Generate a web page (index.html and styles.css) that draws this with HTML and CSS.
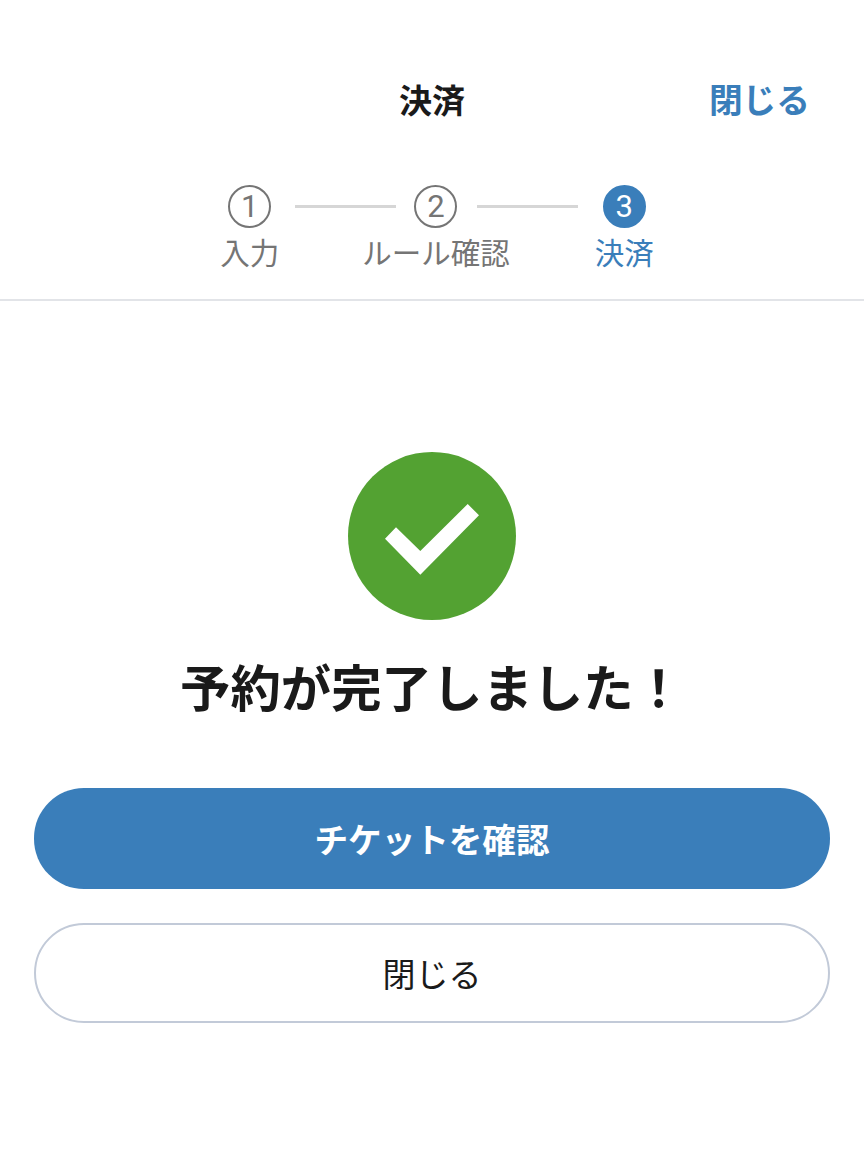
FILE: index.html
```html
<!DOCTYPE html><html lang="ja"><head><meta charset="utf-8"/>
<title>決済</title>
<link rel="stylesheet" href="styles.css">
</head>
<body>
<header class="top">
	<div class="title">決済</div>
	<a class="close-link">閉じる</a>
</header>
<div class="steps">
	<div class="step">
		<span class="num">1</span>
		<span class="label">入力</span>
	</div>
	<div class="line line1"></div>
	<div class="step">
		<span class="num">2</span>
		<span class="label">ルール確認</span>
	</div>
	<div class="line line2"></div>
	<div class="step on">
		<span class="num">3</span>
		<span class="label">決済</span>
	</div>
</div>
<main class="done">
	<svg class="check" width="168" height="168" viewBox="0 0 168 168">
		<circle cx="84" cy="84" r="84" fill="#53a232"/>
		<polygon points="37,86.7 48,75.3 72.3,99 119.7,52 131,63.3 72.3,122.7" fill="#fff"/>
	</svg>
	<h1>予約が完了しました！</h1>
	<button class="btn primary">チケットを確認</button>
	<button class="btn plain">閉じる</button>
</main>
</body>
</html>
```

FILE: styles.css
```css
body {
	margin: 0;
	background: #fff;
	color: #1a1a1a;
	font-family: "Noto Sans CJK JP", "Liberation Sans", sans-serif;
}
/* header */
.top {
	position: relative;
	height: 202px;
	box-sizing: border-box;
	padding-top: 74px;
	text-align: center;
}
.title {
	font-size: 33px;
	font-weight: 700;
	line-height: 50px;
}
.close-link {
	position: absolute;
	top: 74px;
	right: 54px;
	font-size: 33.7px;
	font-weight: 700;
	line-height: 50px;
	color: #3a7eba;
}
/* steps */
.steps {
	display: flex;
	justify-content: center;
	align-items: flex-start;
	height: 114px;
	border-bottom: 2px solid #e2e4e8;
	margin-top: -17px;
	padding-left: 10px;
}
.step {
	display: flex;
	flex-direction: column;
	align-items: center;
	color: #757575;
}
.num {
	width: 39px;
	height: 39px;
	border: 2px solid #757575;
	border-radius: 50%;
	display: flex;
	align-items: center;
	justify-content: center;
	font-size: 31px;
	font-family: "Roboto", "Liberation Sans", sans-serif;
}
.label {
	font-size: 29.5px;
	line-height: 44px;
	margin-top: 1px;
}
.step.on {
	color: #3a7eba;
}
.step.on .num {
	background: #3a7eba;
	border-color: #3a7eba;
	color: #fff;
}
.line {
	width: 101px;
	height: 3px;
	background: #d6d6d6;
	margin-top: 20px;
}
.line1 {
	margin-left: 16px;
	margin-right: -34px;
}
.line2 {
	margin-left: -33px;
	margin-right: 17px;
}
/* result */
.done {
	display: flex;
	flex-direction: column;
	align-items: center;
	padding: 151px 34px 0;
}
.check {
	display: block;
}
h1 {
	font-size: 50.4px;
	font-weight: 700;
	line-height: 74px;
	margin: 29px 0 0;
}
.btn {
	display: block;
	width: 100%;
	font-family: inherit;
	border-radius: 50px;
	box-sizing: border-box;
}
.primary {
	height: 101px;
	margin-top: 65px;
	background: #3a7eba;
	border: 0;
	color: #fff;
	font-size: 33.6px;
	font-weight: 700;
}
.plain {
	height: 100px;
	margin-top: 34px;
	background: #fff;
	border: 2px solid #c2cad8;
	color: #1a1a1a;
	font-size: 33px;
}
```
